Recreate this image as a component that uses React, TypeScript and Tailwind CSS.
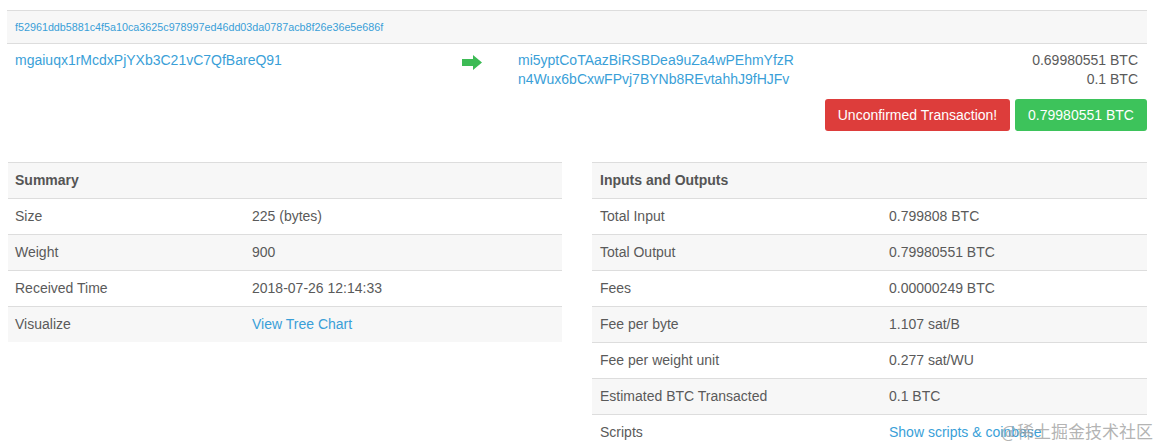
import React from "react";

const link = "text-[#3a9fd8]";

function Row({ label, value, shaded, isLink, labelW, pl }: { label: string; value: string; shaded: boolean; isLink?: boolean; labelW: string; pl: string }) {
  return (
    <div className={`flex h-[36px] items-center border-t border-[#dddddd] ${shaded ? "bg-[#f7f7f7]" : "bg-white"}`}>
      <div className={`${labelW} ${pl} shrink-0 text-[#5a5a5a]`}>{label}</div>
      <div className={isLink ? link : "text-[#5a5a5a]"}>{value}</div>
    </div>
  );
}

export default function App() {
  const summary = [
    ["Size", "225 (bytes)"],
    ["Weight", "900"],
    ["Received Time", "2018-07-26 12:14:33"],
    ["Visualize", "View Tree Chart"],
  ];
  const io = [
    ["Total Input", "0.799808 BTC"],
    ["Total Output", "0.79980551 BTC"],
    ["Fees", "0.00000249 BTC"],
    ["Fee per byte", "1.107 sat/B"],
    ["Fee per weight unit", "0.277 sat/WU"],
    ["Estimated BTC Transacted", "0.1 BTC"],
    ["Scripts", "Show scripts & coinbase"],
  ];
  return (
    <div className="relative h-[448px] w-[1161px] overflow-hidden bg-white pl-[7px] pr-[14px] pt-[10px] text-[14px] font-['Liberation_Sans',Arial,sans-serif]">
      <div className="flex h-[34px] items-center border-y border-[#dddddd] bg-[#f7f7f7] pl-2">
        <span className={`${link} text-[10.75px]`}>f52961ddb5881c4f5a10ca3625c978997ed46dd03da0787acb8f26e36e5e686f</span>
      </div>
      <div className="flex pt-[7px] leading-[19px]">
        <div className={`w-[455px] shrink-0 pl-2 ${link}`}>mgaiuqx1rMcdxPjYXb3C21vC7QfBareQ91</div>
        <div className="w-[56px] shrink-0 pt-[4px]">
          <svg width="20" height="15" viewBox="0 0 20 15">
            <polygon points="0,4 11,4 11,0 20,7.5 11,15 11,11 0,11" fill="#3dbb55" />
          </svg>
        </div>
        <div className={`flex-1 ${link}`}>
          <div>mi5yptCoTAazBiRSBDea9uZa4wPEhmYfzR</div>
          <div>n4Wux6bCxwFPvj7BYNb8REvtahhJ9fHJFv</div>
        </div>
        <div className="pr-[9px] text-right text-[#5a5a5a]">
          <div>0.69980551 BTC</div>
          <div>0.1 BTC</div>
        </div>
      </div>
      <div className="mt-[10px] flex justify-end gap-[5px]">
        <div className="flex h-[32px] w-[185px] items-center justify-center rounded-[3px] bg-[#dd3d3b] text-white">Unconfirmed Transaction!</div>
        <div className="flex h-[32px] w-[132px] items-center justify-center rounded-[3px] bg-[#3dc35b] text-white">0.79980551 BTC</div>
      </div>
      <div className="mt-[31px] grid grid-cols-2 gap-[30px]">
        <div className="ml-[1px]">
          <div className="flex h-[36px] items-center border-t border-[#dddddd] bg-[#f7f7f7] pl-[7px] font-bold text-[#555555]">Summary</div>
          {summary.map(([l, v], i) => (
            <Row key={l} label={l} value={v} shaded={i % 2 === 1} isLink={l === "Visualize"} labelW="w-[244px]" pl="pl-[7px]" />
          ))}
        </div>
        <div>
          <div className="flex h-[36px] items-center border-t border-[#dddddd] bg-[#f7f7f7] pl-2 font-bold text-[#555555]">Inputs and Outputs</div>
          {io.map(([l, v], i) => (
            <Row key={l} label={l} value={v} shaded={i % 2 === 1} isLink={l === "Scripts"} labelW="w-[297px]" pl="pl-2" />
          ))}
        </div>
      </div>
      <div className="absolute bottom-[5px] right-[8px] text-[17px] text-[#a0a0a0]/80 font-['Noto_Sans_CJK_SC',sans-serif]">@稀土掘金技术社区</div>
    </div>
  );
}
